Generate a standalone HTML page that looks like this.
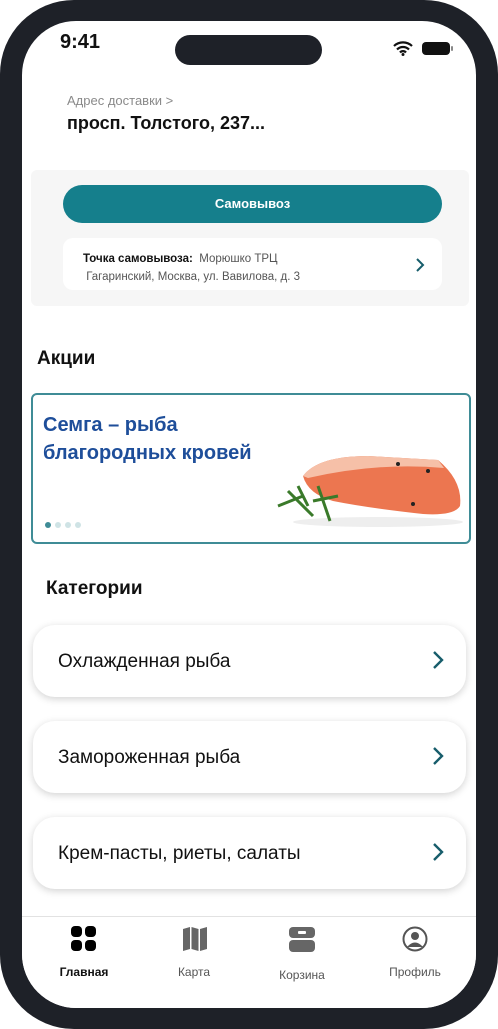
<!DOCTYPE html>
<html><head><meta charset="utf-8"><style>
*{margin:0;padding:0;box-sizing:border-box}
body{width:498px;height:1029px;background:#fff;position:relative;overflow:hidden;font-family:"Liberation Sans","DejaVu Sans",sans-serif}
.frame{position:absolute;left:0;top:0;width:498px;height:1029px;background:#1e2128;border-radius:74px}
.screen{position:absolute;left:22px;top:21px;width:454px;height:987px;background:#fff;border-radius:54px;overflow:hidden}
.a{position:absolute}
.card{position:absolute;left:11px;width:433px;height:72px;background:#fff;border-radius:22px;box-shadow:0 2px 8px rgba(0,0,0,.18);font-size:19px;color:#111;padding:26px 0 0 25px}
.chev{position:absolute;right:22px;top:25px}
.tab{position:absolute;top:944px;font-size:12px;color:#555;text-align:center;width:80px}
</style></head><body>
<div class="frame"></div>
<div class="screen">
<div class="a" style="left:38px;top:10px;font-size:20px;font-weight:bold;color:#111">9:41</div>
<div class="a" style="left:153px;top:14px;width:147px;height:30px;background:#1e2128;border-radius:15px"></div>
<svg class="a" style="left:371px;top:20px" width="20" height="15" viewBox="0 0 20 15"><path d="M1 5a13 13 0 0 1 18 0M4 8.5a8.5 8.5 0 0 1 12 0M7 11.5a4 4 0 0 1 6 0" stroke="#111" stroke-width="2.2" fill="none"/><circle cx="10" cy="13.5" r="1.5" fill="#111"/></svg>
<div class="a" style="left:400px;top:21px;width:28px;height:13px;background:#111;border-radius:4px"></div>
<div class="a" style="left:429px;top:25px;width:2px;height:5px;background:#888;border-radius:1px"></div>
<div class="a" style="left:45px;top:72px;font-size:13px;color:#8a8a8a">Адрес доставки &gt;</div>
<div class="a" style="left:45px;top:92px;font-size:18px;font-weight:bold;color:#111">просп. Толстого, 237...</div>
<div class="a" style="left:9px;top:149px;width:438px;height:136px;background:#f6f6f6;border-radius:6px"></div>
<div class="a" style="left:41px;top:164px;width:379px;height:38px;background:#157f8c;border-radius:19px;color:#fff;font-weight:bold;font-size:13px;text-align:center;line-height:38px">Самовывоз</div>
<div class="a" style="left:41px;top:217px;width:379px;height:52px;background:#fff;border-radius:10px"></div>
<div class="a" style="left:61px;top:229px;font-size:11.5px;color:#555;line-height:18px"><b style="color:#111">Точка самовывоза:</b>&nbsp; Морюшко ТРЦ<br>&nbsp;Гагаринский, Москва, ул. Вавилова, д. 3</div>
<svg class="a" style="left:393px;top:236px" width="10" height="16" viewBox="0 0 10 16"><path d="M2 2l6 6-6 6" stroke="#175d6b" stroke-width="2" fill="none"/></svg>
<div class="a" style="left:15px;top:327px;font-size:19px;font-weight:bold;color:#111">Акции</div>
<div class="a" style="left:9px;top:372px;width:440px;height:151px;border:2px solid #3f8c96;border-radius:6px;background:#fff"></div>
<div class="a" style="left:21px;top:390px;font-size:20px;font-weight:bold;color:#1e4e9a;line-height:28px">Семга – рыба<br>благородных кровей</div>
<svg class="a" style="left:236px;top:425px" width="210" height="85" viewBox="0 0 210 85"><ellipse cx="120" cy="76" rx="85" ry="5" fill="#eee"/><path d="M45 30 Q60 10 110 10 L180 14 Q205 35 202 60 Q196 70 165 68 Q110 62 75 55 Q50 48 45 30Z" fill="#ec7650"/><path d="M45 30 Q60 10 110 10 L180 14 L186 22 Q120 16 50 32Z" fill="#f6c0a8"/><path d="M20 60 L45 50 M30 45 L55 70 M40 40 L50 60 M60 40 L72 75 M55 55 L80 50" stroke="#3a7a2a" stroke-width="3"/><circle cx="140" cy="18" r="2" fill="#222"/><circle cx="170" cy="25" r="2" fill="#222"/><circle cx="155" cy="58" r="2" fill="#222"/></svg>
<div class="a" style="left:23px;top:501px;width:6px;height:6px;border-radius:3px;background:#3f8c96"></div>
<div class="a" style="left:33px;top:501px;width:6px;height:6px;border-radius:3px;background:#cfe3e5"></div>
<div class="a" style="left:43px;top:501px;width:6px;height:6px;border-radius:3px;background:#cfe3e5"></div>
<div class="a" style="left:53px;top:501px;width:6px;height:6px;border-radius:3px;background:#cfe3e5"></div>
<div class="a" style="left:24px;top:557px;font-size:19px;font-weight:bold;color:#111">Категории</div>
<div class="card" style="top:604px">Охлажденная рыба<svg class="chev" width="12" height="20" viewBox="0 0 12 20"><path d="M2 2l8 8-8 8" stroke="#175d6b" stroke-width="2.4" fill="none"/></svg></div>
<div class="card" style="top:700px">Замороженная рыба<svg class="chev" width="12" height="20" viewBox="0 0 12 20"><path d="M2 2l8 8-8 8" stroke="#175d6b" stroke-width="2.4" fill="none"/></svg></div>
<div class="card" style="top:796px">Крем-пасты, риеты, салаты<svg class="chev" width="12" height="20" viewBox="0 0 12 20"><path d="M2 2l8 8-8 8" stroke="#175d6b" stroke-width="2.4" fill="none"/></svg></div>
<div class="a" style="left:0;top:895px;width:454px;height:92px;background:#fff;border-top:1px solid #e2e2e2"></div>
<svg class="a" style="left:49px;top:905px" width="26" height="26"><rect x="0" y="0" width="11" height="11" rx="4"/><rect x="14" y="0" width="11" height="11" rx="4"/><rect x="0" y="14" width="11" height="11" rx="4"/><rect x="14" y="14" width="11" height="11" rx="4"/></svg>
<svg class="a" style="left:160px;top:905px" width="26" height="26" viewBox="0 0 26 26"><path d="M1 3l7-2v22l-7 2zM9.5 1l7 2v22l-7-2zM18 3l7-2v22l-7 2z" fill="#666"/></svg>
<svg class="a" style="left:267px;top:906px" width="26" height="26" viewBox="0 0 26 26"><rect x="0" y="0" width="26" height="11" rx="4" fill="#666"/><rect x="0" y="13" width="26" height="12" rx="4" fill="#666"/><rect x="9" y="4" width="8" height="3" rx="1" fill="#fff"/></svg>
<svg class="a" style="left:380px;top:905px" width="26" height="26" viewBox="0 0 26 26"><circle cx="13" cy="13" r="11.5" fill="none" stroke="#555" stroke-width="2"/><circle cx="13" cy="10" r="4" fill="#555"/><path d="M5 21q8-9 16 0" fill="#555"/></svg>
<div class="tab" style="left:22px;color:#111;font-weight:bold">Главная</div>
<div class="tab" style="left:132px">Карта</div>
<div class="tab" style="left:240px;top:947px">Корзина</div>
<div class="tab" style="left:353px">Профиль</div>
</div>
</body></html>
